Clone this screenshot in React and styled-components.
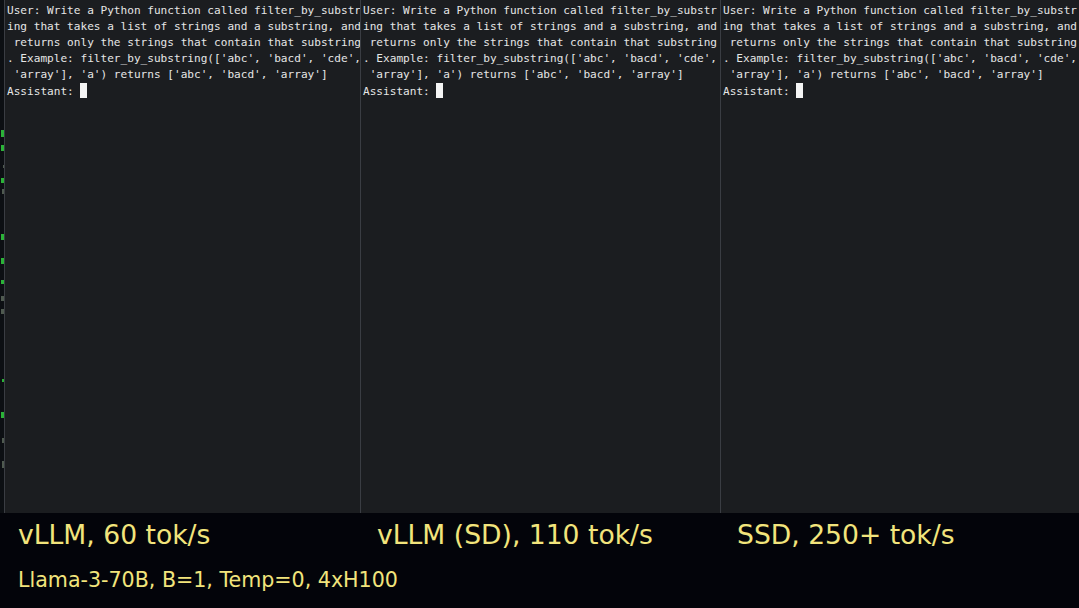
import React from "react";
import styled, { createGlobalStyle } from "styled-components";

const Global = createGlobalStyle`
  html, body { margin: 0; padding: 0; background: #03040a; }
  body { width: 1079px; height: 608px; overflow: hidden; }
`;

const Screen = styled.div`
  width: 1079px;
  height: 608px;
  display: flex;
  flex-direction: column;
  background: #03040a;
`;

const Terminals = styled.div`
  height: 513px;
  display: flex;
  flex-direction: row;
`;

const Strip = styled.div`
  width: 4px;
  flex: none;
  background: #0c0f13;
  overflow: hidden;
  display: flex;
  flex-direction: column;
  align-items: flex-end;
  padding-top: 130px;
  box-sizing: border-box;
`;

const StripMark = styled.div`
  width: ${(p) => p.w || 3}px;
  height: ${(p) => p.h || 6}px;
  margin-top: ${(p) => p.gap}px;
  background: ${(p) => (p.dim ? "#4f5a50" : "#2bb338")};
`;

const Pane = styled.div`
  width: ${(p) => p.w}px;
  flex: none;
  box-sizing: border-box;
  border-left: 1px solid #3a3d43;
  background: #1b1d20;
  padding: 3px 0 0 2px;
  overflow: hidden;
`;

const Line = styled.div`
  font-family: "DejaVu Sans Mono", "Liberation Mono", monospace;
  font-size: 11.1px;
  line-height: 16px;
  height: 16px;
  color: #e6e6e6;
  white-space: pre;
`;

const Cursor = styled.span`
  display: inline-block;
  width: 7px;
  height: 15px;
  background: #f4f4f4;
  vertical-align: -3px;
`;

const Captions = styled.div`
  flex: 1;
  display: flex;
  flex-direction: column;
  padding-left: 18px;
`;

const SpeedRow = styled.div`
  display: grid;
  grid-template-columns: 359px 360px 342px;
  margin-top: 7px;
`;

const Speed = styled.div`
  font-family: "DejaVu Sans", "Verdana", sans-serif;
  font-size: 26.6px;
  line-height: 30px;
  color: #f2e47c;
  white-space: nowrap;
`;

const Setup = styled.div`
  font-family: "DejaVu Sans", "Verdana", sans-serif;
  font-size: 20.6px;
  line-height: 24px;
  margin-top: 18px;
  color: #f2e47c;
  white-space: nowrap;
`;

const lines = [
  "User: Write a Python function called filter_by_substr",
  "ing that takes a list of strings and a substring, and",
  " returns only the strings that contain that substring",
  ". Example: filter_by_substring(['abc', 'bacd', 'cde',",
  " 'array'], 'a') returns ['abc', 'bacd', 'array']",
];

const marks = [
  { gap: 0, h: 7 },
  { gap: 8, h: 6 },
  { gap: 14, h: 3, w: 1, dim: true },
  { gap: 10, h: 5 },
  { gap: 6, h: 5, w: 2, dim: true },
  { gap: 40, h: 6 },
  { gap: 18, h: 6 },
  { gap: 16, h: 4 },
  { gap: 12, h: 5, dim: true },
  { gap: 8, h: 5, dim: true },
  { gap: 65, h: 3, w: 2 },
  { gap: 30, h: 6 },
  { gap: 20, h: 5, w: 2, dim: true },
  { gap: 18, h: 7, w: 2, dim: true },
];

function Terminal({ w }) {
  return (
    <Pane w={w}>
      {lines.map((l, i) => (
        <Line key={i}>{l}</Line>
      ))}
      <Line>
        {"Assistant: "}
        <Cursor />
      </Line>
    </Pane>
  );
}

export default function App() {
  return (
    <>
      <Global />
      <Screen>
        <Terminals>
          <Strip>
            {marks.map((m, i) => (
              <StripMark key={i} gap={m.gap} h={m.h} w={m.w} dim={m.dim} />
            ))}
          </Strip>
          <Terminal w={356} />
          <Terminal w={360} />
          <Terminal w={359} />
        </Terminals>
        <Captions>
          <SpeedRow>
            <Speed>vLLM, 60 tok/s</Speed>
            <Speed>vLLM (SD), 110 tok/s</Speed>
            <Speed>SSD, 250+ tok/s</Speed>
          </SpeedRow>
          <Setup>Llama-3-70B, B=1, Temp=0, 4xH100</Setup>
        </Captions>
      </Screen>
    </>
  );
}
